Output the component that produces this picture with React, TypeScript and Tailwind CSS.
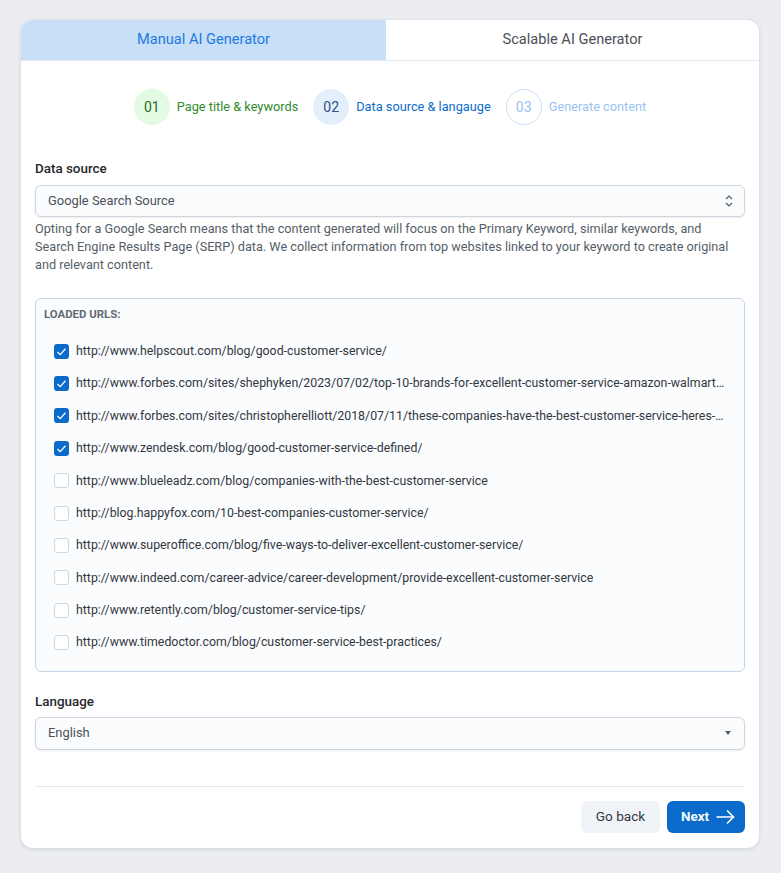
import React from "react";

const urls = [
  "http://www.helpscout.com/blog/good-customer-service/",
  "http://www.forbes.com/sites/shephyken/2023/07/02/top-10-brands-for-excellent-customer-service-amazon-walmart-apple-and-more/",
  "http://www.forbes.com/sites/christopherelliott/2018/07/11/these-companies-have-the-best-customer-service-heres-why-it-matters/",
  "http://www.zendesk.com/blog/good-customer-service-defined/",
  "http://www.blueleadz.com/blog/companies-with-the-best-customer-service",
  "http://blog.happyfox.com/10-best-companies-customer-service/",
  "http://www.superoffice.com/blog/five-ways-to-deliver-excellent-customer-service/",
  "http://www.indeed.com/career-advice/career-development/provide-excellent-customer-service",
  "http://www.retently.com/blog/customer-service-tips/",
  "http://www.timedoctor.com/blog/customer-service-best-practices/",
];

function Check({ on }: { on: boolean }) {
  return on ? (
    <span className="flex h-[15px] w-[15px] shrink-0 items-center justify-center rounded-[3px] bg-[#0b6bcb]">
      <svg width="11" height="11" viewBox="0 0 11 11" fill="none">
        <path d="M1.5 6 L4.2 8.6 L9.5 2.8" stroke="#fff" strokeWidth="1.3" />
      </svg>
    </span>
  ) : (
    <span className="h-[15px] w-[15px] shrink-0 rounded-[3px] border border-[#cdd7e1] bg-white" />
  );
}

export default function App() {
  return (
    <div className="min-h-[873px] bg-[#ebedf1] pt-5 pl-[21px] font-['Roboto',sans-serif]">
      <div className="h-[828px] w-[738px] overflow-hidden rounded-xl bg-white shadow-[0_1px_4px_rgba(20,30,50,0.14)]">
        <div className="flex h-[41px] border-b border-[#e4e7ec] text-[14.6px] leading-[39px]">
          <div className="w-[365px] bg-[#c7dff7] text-center text-[#1f7ae0]">Manual AI Generator</div>
          <div className="flex-1 text-center text-[#4b5058]">Scalable AI Generator</div>
        </div>

        <div className="px-3.5">
          <div className="mt-7 flex items-center justify-center text-[12.75px]">
            <span className="flex h-9 w-9 items-center justify-center rounded-full bg-[#e3fbe3] text-sm text-[#2a6e2a]">01</span>
            <span className="ml-[7px] text-[#2e8b2e]">Page title &amp; keywords</span>
            <span className="ml-[15px] flex h-9 w-9 items-center justify-center rounded-full bg-[#e3effb] text-sm text-[#32508a]">02</span>
            <span className="ml-[7px] text-[#0b6bcb]">Data source &amp; langauge</span>
            <span className="ml-[15px] flex h-9 w-9 items-center justify-center rounded-full border border-[#c7dff7] text-sm text-[#97c3f0]">03</span>
            <span className="ml-[7px] text-[#97c3f0]">Generate content</span>
          </div>

          <div className="mt-[35px] text-[13.4px] leading-[18px] font-medium text-[#25282c]">Data source</div>
          <div className="mt-[7px] flex h-8 items-center justify-between rounded-md border border-[#cdd7e1] bg-[#fbfcfe] pr-2.5 pl-3 text-[12.9px] text-[#4b5058] shadow-[0_1px_2px_rgba(21,21,21,0.08)]">
            <span>Google Search Source</span>
            <svg width="10" height="16" viewBox="0 0 10 16" fill="none" stroke="#555e68" strokeWidth="1.2">
              <path d="M2 6 L5 3 L8 6" />
              <path d="M2 10 L5 13 L8 10" />
            </svg>
          </div>
          <p className="mt-[3px] pr-2.5 text-[12.7px] leading-[18px] text-[#555e68]">
            Opting for a Google Search means that the content generated will focus on the Primary Keyword, similar keywords, and Search Engine Results Page (SERP) data. We collect information from top websites linked to your keyword to create original and relevant content.
          </p>

          <div className="mt-6 h-[374px] rounded-md border border-[#c5d6e6] bg-[#fbfcfe] pt-2 pr-[19px] pl-2">
            <div className="text-[11.4px] leading-[15px] font-bold text-[#636b74]">LOADED URLS:</div>
            <div className="mt-[13px] flex flex-col pl-2.5">
              {urls.map((u, i) => (
                <div key={u} className="flex h-[32.4px] items-center gap-[7px]">
                  <Check on={i < 4} />
                  <span className="truncate text-[12.35px] text-[#32383e]">{u}</span>
                </div>
              ))}
            </div>
          </div>

          <div className="mt-[21px] text-[13.4px] leading-[18px] font-medium text-[#25282c]">Language</div>
          <div className="mt-1.5 flex h-[33px] items-center justify-between rounded-md border border-[#cdd7e1] bg-[#fbfcfe] pr-[13px] pl-3 pb-px text-[12.9px] text-[#4b5058] shadow-[0_1px_2px_rgba(21,21,21,0.08)]">
            <span>English</span>
            <span className="h-0 w-0 border-x-[3.5px] border-t-[4px] border-x-transparent border-t-[#555e68]" />
          </div>

          <div className="mt-9 border-t border-[#e4e7ec]" />

          <div className="mt-3.5 flex justify-end gap-[7px]">
            <button className="h-8 w-[79px] rounded-md bg-[#f0f4f8] pb-px text-[13.6px] font-normal text-[#32383e]">Go back</button>
            <button className="flex h-8 w-[78px] items-center gap-[7px] rounded-md bg-[#0b6bcb] pl-3.5 text-[13.4px] font-bold text-[#f5f8fc]">
              Next
              <svg width="19" height="16" viewBox="0 0 19 16" fill="none" stroke="#fff" strokeWidth="1.6">
                <path d="M0.5 8 H17.5" />
                <path d="M11 1.5 L17.5 8 L11 14.5" />
              </svg>
            </button>
          </div>
        </div>
      </div>
    </div>
  );
}
